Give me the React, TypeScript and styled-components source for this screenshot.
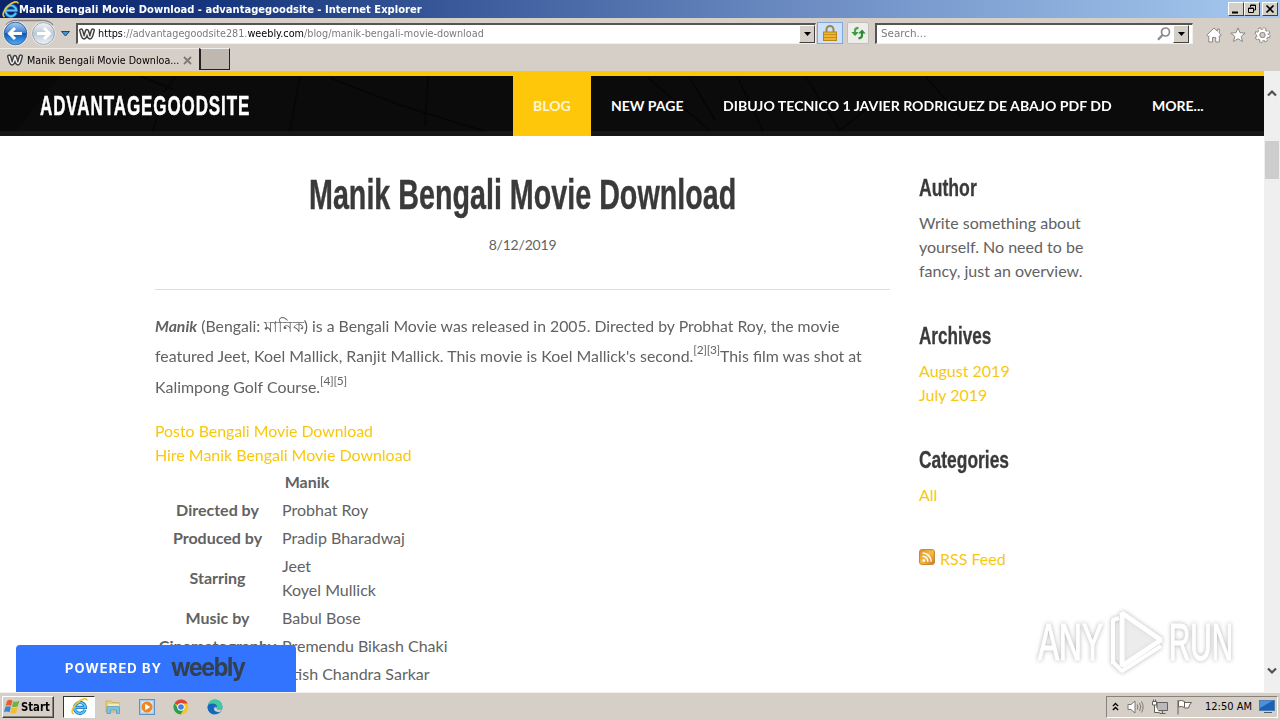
import React, { useLayoutEffect, useRef, useState } from 'react';
import styled, { createGlobalStyle } from 'styled-components';

const tahoma = "'DejaVu Sans Condensed', 'DejaVu Sans', sans-serif";
const narrow = "'Liberation Sans Narrow', 'Liberation Sans', sans-serif";

const GlobalStyle = createGlobalStyle`
  * {
    box-sizing: border-box;
  }

  body {
    margin: 0;
    overflow: hidden;
    background: #fff;
  }
`;

const Screen = styled.div`
  position: relative;
  width: 1280px;
  height: 720px;
  display: flex;
  flex-direction: column;
  overflow: hidden;
  font-family: ${tahoma};
  font-size: 11px;
  color: #000;

  svg {
    display: block;
    flex-shrink: 0;
  }
`;

/* text squeezed or stretched to a given width */

const FitBox = styled.span<{ $width: number }>`
  display: inline-block;
  width: ${(p) => p.$width}px;
  flex-shrink: 0;
  text-align: left;
  white-space: nowrap;
`;

const FitInner = styled.span`
  display: inline-block;
  transform-origin: 0 50%;
`;

function Fit({ width, children }: { width: number; children: React.ReactNode }) {
  const ref = useRef<HTMLSpanElement>(null);
  const [scale, setScale] = useState(1);

  useLayoutEffect(() => {
    if (ref.current) {
      setScale(width / ref.current.offsetWidth);
    }
  }, [width]);

  return (
    <FitBox $width={width}>
      <FitInner ref={ref} style={{ transform: `scaleX(${scale})` }}>
        {children}
      </FitInner>
    </FitBox>
  );
}

/* window chrome */

const TitleBar = styled.div`
  height: 18px;
  flex-shrink: 0;
  display: flex;
  align-items: center;
  padding: 0 2px;
  background: linear-gradient(90deg, #0a246a 0%, #18387f 18%, #6787bf 60%, #a6caf0 100%);
  color: #fff;
  font-weight: 700;
`;

const WindowButtons = styled.div`
  margin-left: auto;
  display: flex;
`;

const WindowButton = styled.span<{ $gap?: boolean }>`
  width: 16px;
  height: 14px;
  margin-left: ${(p) => (p.$gap ? 2 : 0)}px;
  background: #d4d0c8;
  border: 1px solid;
  border-color: #fff #404040 #404040 #fff;
`;

const Toolbar = styled.div`
  height: 30px;
  flex-shrink: 0;
  display: flex;
  align-items: center;
  background: #d6cfc8;
`;

const Field = styled.div<{ $width: number; $left: number; $pad: number }>`
  width: ${(p) => p.$width}px;
  height: 21px;
  margin-left: ${(p) => p.$left}px;
  padding-left: ${(p) => p.$pad}px;
  display: flex;
  align-items: center;
  background: #fff;
  border: 1px solid;
  border-color: #555 #f3f0ec #f3f0ec #555;
  border-top-width: 2px;
  border-left-width: 2px;
  color: #7b7b7b;
`;

const Host = styled.span`
  color: #000;
`;

const FieldEnd = styled.div<{ $right?: number }>`
  display: flex;
  align-items: center;
  gap: 2px;
  margin-left: auto;
  margin-right: ${(p) => p.$right ?? 0}px;
`;

const DropButton = styled.span`
  width: 16px;
  height: 18px;
  display: flex;
  align-items: center;
  justify-content: center;
  background: #d4d0c8;
  border: 1px solid;
  border-color: #fff #404040 #404040 #fff;
`;

const ToolButton = styled.span<{ $active?: boolean; $width: number; $left: number }>`
  width: ${(p) => p.$width}px;
  height: 22px;
  margin-left: ${(p) => p.$left}px;
  display: flex;
  align-items: center;
  justify-content: center;
  background: ${(p) => (p.$active ? '#cfe1fa' : '#efedea')};
  border: 1px solid ${(p) => (p.$active ? '#7fa9de' : '#c3beb8')};
  border-radius: ${(p) => (p.$active ? 0 : 2)}px;
`;

const Commands = styled.div`
  display: flex;
  gap: 8px;
  margin: 4px 0 0 13px;
`;

const TabBar = styled.div`
  height: 23px;
  flex-shrink: 0;
  display: flex;
  background: #d6cfc8;
`;

const Tab = styled.div`
  width: 199px;
  display: flex;
  align-items: center;
  padding: 0 6px 0 7px;
  gap: 4px;
  border-top: 1px solid #eeeae5;
`;

const NewTab = styled.div`
  width: 31px;
  height: 22px;
  background: #bfb8b1;
  border: 1px solid #222;
  border-top-color: #eee;
  border-left-width: 2px;
`;

/* page */

const Viewport = styled.div`
  flex: 1;
  min-height: 0;
  display: flex;
  background: #fff;
`;

const Page = styled.div`
  position: relative;
  width: 1264px;
  overflow: hidden;
  font-family: Lato, sans-serif;
  font-size: 16px;
  line-height: 24px;
  color: #626262;
`;

const Header = styled.header`
  position: relative;
  height: 65px;
  display: flex;
  padding-left: 40px;
  background: #0b0b0b;
  border-top: 5px solid #fec70a;
  color: #fff;
`;

const HeaderTexture = styled.svg`
  position: absolute;
  left: 0;
  top: 0;
`;

const SiteTitle = styled.div`
  position: relative;
  width: 473px;
  font-family: ${narrow};
  font-weight: 700;
  font-size: 28px;
  line-height: 59px;
  letter-spacing: 1.5px;
  -webkit-text-stroke: 0.5px #fff;
`;

const Nav = styled.nav`
  position: relative;
  display: flex;
`;

const NavItem = styled.span<{ $active?: boolean }>`
  padding: 0 20px;
  font-size: 14px;
  font-weight: 700;
  line-height: 60px;
  background: ${(p) => (p.$active ? '#fec70a' : 'transparent')};
  color: ${(p) => (p.$active ? '#fff6d2' : '#fff')};
`;

const Columns = styled.div`
  display: flex;
  padding-left: 155px;
`;

const Post = styled.main`
  width: 735px;
  margin-right: 29px;
`;

const PostTitle = styled.h2`
  margin: 28px 0 0;
  font-family: ${narrow};
  font-weight: 700;
  font-size: 43px;
  line-height: 60px;
  text-align: center;
  color: #3a3a3a;
  -webkit-text-stroke: 0.4px #3a3a3a;
`;

const PostDate = styled.div`
  height: 66px;
  padding-top: 9px;
  border-bottom: 1px solid #dedede;
  font-size: 14px;
  letter-spacing: -0.2px;
  text-align: center;
`;

const Paragraph = styled.p`
  margin: 21px 0 17px;
  line-height: 30.4px;
  white-space: nowrap;

  sup {
    font-size: 12px;
    line-height: 0;
    letter-spacing: -0.3px;
    vertical-align: 8px;
  }
`;

const YellowLink = styled.a`
  display: block;
  color: #f8c80e;
`;

const Credits = styled.div`
  width: 304px;
  padding-top: 1px;
  display: grid;
  grid-template-columns: 127px 1fr;
  align-items: center;
  row-gap: 4px;
  white-space: nowrap;
`;

const CreditTitle = styled.strong`
  grid-column: 1 / 3;
  padding-top: 2px;
  text-align: center;
`;

const CreditLabel = styled.strong`
  margin-left: -2px;
  text-align: center;
`;

const Sidebar = styled.aside`
  width: 190px;
  padding-top: 36px;
`;

const SideTitle = styled.h3`
  margin: 0 0 8px;
  font-family: ${narrow};
  font-weight: 700;
  font-size: 24px;
  line-height: 31px;
  color: #3a3a3a;
  -webkit-text-stroke: 0.3px #3a3a3a;
`;

const SideBlock = styled.section`
  margin-bottom: 37px;
`;

const Rss = styled.div`
  display: flex;
  gap: 5px;
  margin-top: 40px;

  svg {
    margin-top: 2px;
  }
`;

const Powered = styled.div`
  position: absolute;
  left: 16px;
  bottom: 0;
  width: 280px;
  height: 47px;
  display: flex;
  align-items: center;
  padding-left: 49px;
  background: #3374ff;
  border-radius: 4px 4px 0 0;
  color: #fff;
  font-family: Inter, sans-serif;
  font-weight: 700;
  font-size: 12.5px;
  letter-spacing: 1px;
`;

const WeeblyMark = styled.span`
  margin: -3px 0 0 9px;
  color: #33404f;
  font-size: 25px;
  letter-spacing: -1.5px;
`;

const Watermark = styled.svg`
  position: absolute;
  left: 1028px;
  top: 529px;
  filter: drop-shadow(0 0 2px rgba(0, 0, 0, 0.3));
`;

const Scrollbar = styled.div`
  width: 16px;
  display: flex;
  flex-direction: column;
  align-items: center;
  padding: 18px 0 17px;
  background: #efefef;
`;

const Thumb = styled.div`
  width: 14px;
  height: 38px;
  margin: 44px 0 auto;
  background: #cdcdcd;
`;

/* taskbar */

const Taskbar = styled.div`
  height: 28px;
  flex-shrink: 0;
  display: flex;
  align-items: center;
  padding: 0 2px;
  background: #d6cfc8;
  border-top: 1px solid #f4f1ee;
`;

const StartButton = styled.div`
  width: 52px;
  height: 22px;
  display: flex;
  align-items: center;
  padding-left: 1px;
  border: 1px solid;
  border-color: #fff #404040 #404040 #fff;
  box-shadow: inset -1px -1px #86817b;
  font-weight: 700;
  font-size: 12px;
`;

const ActiveApp = styled.div`
  width: 32px;
  height: 22px;
  margin-left: 9px;
  display: flex;
  align-items: center;
  justify-content: center;
  background: #fff;
  border: 1px solid;
  border-color: #333 #fff #fff #333;
`;

const Launchers = styled.div`
  display: flex;
  gap: 18px;
  margin-left: 10px;
`;

const Tray = styled.div`
  width: 172px;
  height: 22px;
  margin-left: auto;
  display: flex;
  align-items: center;
  padding-left: 5px;
  border: 1px solid;
  border-color: #88827c #fff #fff #88827c;
`;

const TrayIcons = styled.div`
  display: flex;
  align-items: center;
  gap: 8px;
  margin-right: 12px;
`;

const DesktopIcon = styled.svg`
  margin-left: 7px;
`;

/* icons */

function IeIcon({ size = 16 }: { size?: number }) {
  return (
    <svg width={size} height={size} viewBox="0 0 16 16" fill="none">
      <path d="M13.2 11.1A5.1 5.1 0 1 1 13.5 8.9H4.2" stroke="#1676c8" strokeWidth="3" />
      <path d="M13.2 11.1A5.1 5.1 0 1 1 13.5 8.9H4.2" stroke="#63c5f3" strokeWidth="1.5" />
      <path d="M2.6 14.8C-.4 14.2 1.2 9 5.5 4.8 9.4 1 14.7-.6 15.2 2.4" stroke="#edc52e" strokeWidth="1.5" />
    </svg>
  );
}

function WeeblyIcon() {
  return (
    <svg width="16" height="16" viewBox="0 0 16 16" fill="none" strokeLinejoin="round" strokeLinecap="round">
      <path d="M2.200 4.500 3.800 10Q5 13 6.400 10L8 5 9.600 10Q11 13 12.200 10L13.800 4.500" stroke="#3f3f3f" strokeWidth="4.400" />
      <path d="M2.200 4.500 3.800 10Q5 13 6.400 10L8 5 9.600 10Q11 13 12.200 10L13.800 4.500" stroke="#f4f2f0" strokeWidth="1.500" />
    </svg>
  );
}

function NavArrows() {
  return (
    <svg width="72" height="30" viewBox="0 0 72 30" fill="none">
      <defs>
        <linearGradient id="back" x1="0" y1="0" x2="0" y2="1">
          <stop offset="0" stopColor="#a8cdf3" />
          <stop offset=".48" stopColor="#3d7fd0" />
          <stop offset=".5" stopColor="#1456b4" />
          <stop offset="1" stopColor="#4eb2f4" />
        </linearGradient>
        <linearGradient id="fwd" x1="0" y1="0" x2="0" y2="1">
          <stop offset="0" stopColor="#f3f5f8" />
          <stop offset=".5" stopColor="#bcc8d6" />
          <stop offset="1" stopColor="#eef3f8" />
        </linearGradient>
      </defs>
      <path d="M6 7Q10 2.500 15.500 2.500H43Q49 2.500 53 7" stroke="#8f8882" strokeWidth="1.500" />
      <circle cx="15.500" cy="15.500" r="12.300" fill="#f2f2f2" />
      <circle cx="15.500" cy="15.500" r="11.300" fill="url(#back)" stroke="#3c65a0" />
      <path d="M22 15.500H10M15 10l-5.500 5.500L15 21" stroke="#fff" strokeWidth="3" />
      <circle cx="43.500" cy="15.500" r="12" fill="#f2f2f2" />
      <circle cx="43.500" cy="15.500" r="11" fill="url(#fwd)" stroke="#9ba6b2" />
      <path d="M37 15.500h12M44 10l5.500 5.500L44 21" stroke="#fff" strokeWidth="3" />
      <path d="M61.500 13.500h8L65.500 18z" fill="#3b9ad2" stroke="#23466f" />
    </svg>
  );
}

function DownTriangle() {
  return (
    <svg width="7" height="4" viewBox="0 0 7 4">
      <path d="M0 0h7L3.500 4z" fill="#000" />
    </svg>
  );
}

function LockIcon() {
  return (
    <svg width="14" height="16" viewBox="0 0 14 16" fill="none">
      <path d="M3.500 8V4.500a3.500 3.500 0 0 1 7 0V8" stroke="#9b8650" strokeWidth="2" />
      <rect x=".5" y="7" width="13" height="8.500" fill="#edb62f" stroke="#b9851b" />
      <path d="M1 9.500h12M1 12.500h12" stroke="#c98f1c" />
    </svg>
  );
}

function RefreshIcon() {
  return (
    <svg width="15" height="14" viewBox="0 0 15 14" fill="none">
      <path d="M4 9V4.500Q4 2 7.500 1.800" stroke="#4aa84c" strokeWidth="2.200" />
      <path d="M.3 6h7.400L4 10z" fill="#3a9b3e" />
      <path d="M11 5v4.500Q11 12 7.500 12.400" stroke="#2e8c35" strokeWidth="2.200" />
      <path d="M7.300 7.600h7.400L11 3.600z" fill="#2e8c35" />
    </svg>
  );
}

function SearchIcon() {
  return (
    <svg width="14" height="14" viewBox="0 0 14 14" fill="none" stroke="#8a8a8a">
      <circle cx="8.500" cy="5" r="4" strokeWidth="1.700" />
      <path d="M5.500 8 1 12.800" strokeWidth="2.300" />
    </svg>
  );
}

function CommandIcons() {
  return (
    <Commands>
      <svg width="16" height="16" viewBox="0 0 16 16" fill="#fff" stroke="#8b8782">
        <path d="M.8 8.200 8 1l3.300 3.200V2h2v4.300l2 1.900-1.300 1.200-.7-.6V15H9.700v-4.500H6.500V15H2.800V8.800l-.7.700z" />
      </svg>
      <svg width="16" height="16" viewBox="0 0 16 16" fill="#fff" stroke="#8b8782">
        <path d="m8 .9 2 4.800 5.200.4-4 3.300 1.300 5.100L8 11.700l-4.500 2.800 1.300-5.100-4-3.300L6 5.700z" />
      </svg>
      <svg width="17" height="16" viewBox="0 0 16 16" fill="none">
        <circle cx="8" cy="8" r="6.200" stroke="#8b8782" strokeWidth="3.400" strokeDasharray="2.700 2.170" />
        <circle cx="8" cy="8" r="4.400" stroke="#8b8782" strokeWidth="4" />
        <circle cx="8" cy="8" r="5.700" stroke="#fff" strokeWidth="2.600" strokeDasharray="2 2.477" />
        <circle cx="8" cy="8" r="4.200" stroke="#fff" strokeWidth="2.400" />
        <circle cx="8" cy="8" r="2.500" fill="#d6cfc8" stroke="#8b8782" strokeWidth=".8" />
      </svg>
    </Commands>
  );
}

function Chevron({ down }: { down?: boolean }) {
  return (
    <svg width="10" height="8" viewBox="0 0 10 8" fill="none">
      <path d={down ? 'M1 1.500l4 4 4-4' : 'M1 6.500l4-4 4 4'} stroke="#505050" strokeWidth="2.200" />
    </svg>
  );
}

function RssIcon() {
  return (
    <svg width="16" height="16" viewBox="0 0 16 16" fill="none">
      <defs>
        <linearGradient id="rss" x1="0" y1="0" x2="1" y2="1">
          <stop offset="0" stopColor="#d98a2e" />
          <stop offset=".5" stopColor="#f3bd45" />
          <stop offset="1" stopColor="#c9771f" />
        </linearGradient>
      </defs>
      <rect x=".5" y=".5" width="15" height="15" rx="2.500" fill="url(#rss)" stroke="#c98a35" />
      <circle cx="4.800" cy="11.500" r="1.300" fill="#fff" />
      <path d="M3.500 7.200a5.300 5.300 0 0 1 5.400 5.500M3.500 4a8.600 8.600 0 0 1 8.700 8.700" stroke="#fff" strokeWidth="1.500" />
    </svg>
  );
}

function WindowsFlag() {
  return (
    <svg width="17" height="17" viewBox="0 0 16 16">
      <path d="M3 2.500Q5.500 1 8 2.500L6.700 7.500Q4 6 1.500 7.500z" fill="#e5602c" />
      <path d="M8.800 3Q11.500 4.400 14.500 2.500L13 7.800Q10.500 9.200 7.500 8z" fill="#6fb23d" />
      <path d="M1.300 8.300Q4 7 6.500 8.300L5.200 13.500Q2.500 12 0 13.500z" fill="#3c83cf" />
      <path d="M7.300 8.800Q10 10.200 12.800 8.500L11.500 13.800Q8.500 15.300 6 14z" fill="#f0bf2d" />
    </svg>
  );
}

function LauncherIcons() {
  return (
    <Launchers>
      <svg width="16" height="16" viewBox="0 0 16 16">
        <path d="M1 2h5l1 1.500h7V13H1z" fill="#e9cf75" stroke="#c3a756" strokeWidth=".7" />
        <path d="M3 5h11v3H3z" fill="#f8eba9" />
        <path d="M2 14.500V8.500q0-1 1-1h10.500q1 0 1 1v6h-3V11h-6v3.500z" fill="#79c3e8" stroke="#4b96bf" strokeWidth=".7" />
      </svg>
      <svg width="16" height="16" viewBox="0 0 16 16">
        <rect x=".5" y=".5" width="15" height="15" fill="#a9cdec" stroke="#5f92c2" />
        <rect x="2.500" y="2.500" width="11" height="11" fill="#e3eff8" />
        <circle cx="8" cy="8" r="5.500" fill="#ef8620" />
        <path d="m6.200 4.800 5 3.200-5 3.200z" fill="#fff" />
      </svg>
      <svg width="16" height="16" viewBox="0 0 16 16">
        <circle cx="8" cy="8" r="7.500" fill="#f4c62d" />
        <path d="M8 8 1.500 4.200A7.500 7.500 0 0 1 14.700 4.500H8z" fill="#dd4436" />
        <path d="M1.500 4.200A7.500 7.500 0 0 0 7.600 15.500L11 9.700 8 8l-3 1.500z" fill="#2d9d55" />
        <circle cx="8" cy="8" r="3.700" fill="#fff" />
        <circle cx="8" cy="8" r="2.800" fill="#3f80ed" />
      </svg>
      <svg width="16" height="16" viewBox="0 0 16 16">
        <circle cx="8" cy="8" r="7.500" fill="#1d86d6" />
        <path d="M1 5.500A7.500 7.500 0 0 1 15.500 7.500q0 3-3.500 3-2.500 0-2.500-1.500Q10.500 7 8.500 5.500 5 3.500 1 5.500z" fill="#43c9a0" />
        <path d="M.5 8Q2 4.500 6.500 4.800 10 5.200 10 8 8 6.500 6.500 8.500 5.500 12 11.500 13.200 8.500 15.800 5 14.900.8 13.200.5 8z" fill="#1767b8" />
        <path d="M9.700 8.400Q9 10.400 12 10.800q2 .1 3-.8-.7 2-2.300 3Q7.500 13.300 7 10q.3-2.200 2.700-1.600z" fill="#d6cfc8" />
      </svg>
    </Launchers>
  );
}

function TrayGlyphs() {
  return (
    <TrayIcons>
      <svg width="7" height="10" viewBox="0 0 8 10" fill="none" stroke="#000" strokeWidth="1.600">
        <path d="m1 4 3-3 3 3M1 8.500l3-3 3 3" />
      </svg>
      <svg width="17" height="16" viewBox="0 0 17 16" fill="none" stroke="#7c7772">
        <path d="M1 5.500h3L8 2v12l-4-3.500H1z" fill="#fff" />
        <path d="M10.200 5.500q1.500 2.500 0 5M12.500 4q2.500 4 0 8M14.500 2.500q3.200 5.500 0 11" />
      </svg>
      <svg width="16" height="16" viewBox="0 0 16 16" fill="#fff" stroke="#65605b">
        <path d="M5 3.500h10.500v8H5z" fill="#b9b9b9" />
        <path d="M7.500 14.500h6M10.500 12v2M.5 2.500h4v3.500h-4zM1.500.5v2M3.500.5v2M2.500 6v7.500h5" />
      </svg>
      <svg width="17" height="16" viewBox="0 0 17 16" fill="#fff" stroke="#65605b">
        <path d="M2 1v14.500M2.500 2q3-1.500 6 .5v6q-3-2-6-.5zM8.500 3.500h7L13.500 6l-1 3h-4" />
      </svg>
    </TrayIcons>
  );
}

const credits = [
  { label: 'Directed by', people: ['Probhat Roy'] },
  { label: 'Produced by', people: ['Pradip Bharadwaj'] },
  { label: 'Starring', people: ['Jeet', 'Koyel Mullick'] },
  { label: 'Music by', people: ['Babul Bose'] },
  { label: 'Cinematography', people: ['Premendu Bikash Chaki'] },
  { label: '', people: ['Atish Chandra Sarkar'] },
];

const navItems = [
  { text: 'BLOG', width: 38, active: true },
  { text: 'NEW PAGE', width: 72 },
  { text: 'DIBUJO TECNICO 1 JAVIER RODRIGUEZ DE ABAJO PDF DD', width: 389 },
  { text: 'MORE...', width: 52 },
];

function Browser() {
  return (
    <>
      <TitleBar>
        <IeIcon size={17} />
        <Fit width={403}>Manik Bengali Movie Download - advantagegoodsite - Internet Explorer</Fit>
        <WindowButtons>
          <WindowButton>
            <svg width="14" height="12"><path d="M3 9.500h6" stroke="#000" strokeWidth="2" /></svg>
          </WindowButton>
          <WindowButton>
            <svg width="14" height="12" fill="none" stroke="#000">
              <path d="M5.500 4V2h5v5h-2M5 2.500h6M3.500 5v4.500h5V5zM3 5.500h6" />
            </svg>
          </WindowButton>
          <WindowButton $gap>
            <svg width="14" height="12"><path d="m3.500 2.500 7 7m0-7-7 7" stroke="#000" strokeWidth="1.700" /></svg>
          </WindowButton>
        </WindowButtons>
      </TitleBar>
      <Toolbar>
        <NavArrows />
        <Field $width={740} $left={4} $pad={1}>
          <WeeblyIcon />
          <span>&nbsp;</span>
          <Fit width={386}>
            <Host>https</Host>://advantagegoodsite281.<Host>weebly.com</Host>/blog/manik-bengali-movie-download
          </Fit>
          <FieldEnd>
            <DropButton><DownTriangle /></DropButton>
          </FieldEnd>
        </Field>
        <ToolButton $active $width={26} $left={1}><LockIcon /></ToolButton>
        <ToolButton $width={22} $left={4}><RefreshIcon /></ToolButton>
        <Field $width={318} $left={6} $pad={4}>
          <Fit width={45}>Search...</Fit>
          <FieldEnd $right={3}>
            <SearchIcon />
            <DropButton><DownTriangle /></DropButton>
          </FieldEnd>
        </Field>
        <CommandIcons />
      </Toolbar>
      <TabBar>
        <Tab>
          <WeeblyIcon />
          <Fit width={152}>Manik Bengali Movie Downloa...</Fit>
          <svg width="9" height="9" viewBox="0 0 9 9">
            <path d="m1 1 7 7m0-7L1 8" stroke="#807a74" strokeWidth="1.800" />
          </svg>
        </Tab>
        <NewTab />
      </TabBar>
    </>
  );
}

function SiteHeader() {
  return (
    <Header>
      <HeaderTexture width="1264" height="60" fill="none" stroke="#060606" strokeWidth="1.500">
        <path d="M0 0h60L12 60H0z" fill="#080808" stroke="none" />
        <path d="M140 0l35 14M176 0l-12 16M300 0l-10 55M330 2l70 27 90 28M428 0l-3 50M648 2l65 55M690 2l25 42M738 2l26 55M805 0l35 55M870 30l-35 28M925 0l35 40M160 30l-8 28" />
        <rect y="55" width="1264" height="5" fill="#171717" stroke="none" />
      </HeaderTexture>
      <SiteTitle><Fit width={210}>ADVANTAGEGOODSITE</Fit></SiteTitle>
      <Nav>
        {navItems.map((item) => (
          <NavItem key={item.text} $active={item.active}>
            <Fit width={item.width}>{item.text}</Fit>
          </NavItem>
        ))}
      </Nav>
    </Header>
  );
}

function BlogPost() {
  return (
    <Post>
      <PostTitle><Fit width={427}>Manik Bengali Movie Download</Fit></PostTitle>
      <PostDate>8/12/2019</PostDate>
      <Paragraph>
        <Fit width={685}>
          <b><i>Manik</i></b> (Bengali: মানিক) is a Bengali Movie was released in 2005. Directed by Probhat Roy, the movie
        </Fit>
        <br />
        <Fit width={707}>
          featured Jeet, Koel Mallick, Ranjit Mallick. This movie is Koel Mallick's second.<sup>[2][3]</sup>This film
          was shot at
        </Fit>
        <br />
        <Fit width={192}>Kalimpong Golf Course.<sup>[4][5]</sup></Fit>
      </Paragraph>
      <YellowLink><Fit width={218}>Posto Bengali Movie Download</Fit></YellowLink>
      <YellowLink><Fit width={256}>Hire Manik Bengali Movie Download</Fit></YellowLink>
      <Credits>
        <CreditTitle>Manik</CreditTitle>
        {credits.map((row) => (
          <React.Fragment key={row.people[0]}>
            <CreditLabel>{row.label}</CreditLabel>
            <div>
              {row.people.map((name) => (
                <div key={name}>{name}</div>
              ))}
            </div>
          </React.Fragment>
        ))}
      </Credits>
    </Post>
  );
}

function BlogSidebar() {
  return (
    <Sidebar>
      <SideBlock>
        <SideTitle><Fit width={58}>Author</Fit></SideTitle>
        Write something about yourself. No need to be fancy, just an overview.
      </SideBlock>
      <SideBlock>
        <SideTitle><Fit width={72}>Archives</Fit></SideTitle>
        <YellowLink>August 2019</YellowLink>
        <YellowLink>July 2019</YellowLink>
      </SideBlock>
      <SideBlock>
        <SideTitle><Fit width={90}>Categories</Fit></SideTitle>
        <YellowLink>All</YellowLink>
      </SideBlock>
      <Rss>
        <RssIcon />
        <YellowLink>RSS Feed</YellowLink>
      </Rss>
    </Sidebar>
  );
}

function App() {
  return (
    <Screen>
      <GlobalStyle />
      <Browser />
      <Viewport>
        <Page>
          <SiteHeader />
          <Columns>
            <BlogPost />
            <BlogSidebar />
          </Columns>
          <Powered>
            <Fit width={97}>POWERED BY</Fit>
            <WeeblyMark><Fit width={74}>weebly</Fit></WeeblyMark>
          </Powered>
          <Watermark width="220" height="84" viewBox="0 0 220 84">
            <g
              fill="#fff"
              stroke="#fff"
              strokeWidth="1.200"
              fontFamily="Liberation Sans Narrow, Liberation Sans, sans-serif"
              fontSize="51"
            >
              <text x="10" y="60" textLength="65" lengthAdjust="spacingAndGlyphs">ANY</text>
              <text x="141" y="60" textLength="64" lengthAdjust="spacingAndGlyphs">RUN</text>
            </g>
            <g fill="none" stroke="#fff" strokeWidth="5" strokeLinejoin="bevel">
              <path d="M94 13v53l39-26z" fill="rgba(255, 255, 255, 0.5)" />
              <path d="M91 18l-6 2v44M85 62l9 9 39-25" strokeWidth="4" />
            </g>
          </Watermark>
        </Page>
        <Scrollbar>
          <Chevron />
          <Thumb />
          <Chevron down />
        </Scrollbar>
      </Viewport>
      <Taskbar>
        <StartButton>
          <WindowsFlag />
          <Fit width={29}>Start</Fit>
        </StartButton>
        <ActiveApp><IeIcon size={17} /></ActiveApp>
        <LauncherIcons />
        <Tray>
          <TrayGlyphs />
          <Fit width={47}>12:50 AM</Fit>
          <DesktopIcon width="17" height="15" viewBox="0 0 17 15">
            <rect x=".5" y="1.500" width="15" height="10" fill="#1d61b4" stroke="#4c7eb5" />
            <path d="M1 2h12L1 9z" fill="#4b92dc" />
            <path d="M5 13.500h8" stroke="#4d5a68" />
          </DesktopIcon>
        </Tray>
      </Taskbar>
    </Screen>
  );
}

export default App;
